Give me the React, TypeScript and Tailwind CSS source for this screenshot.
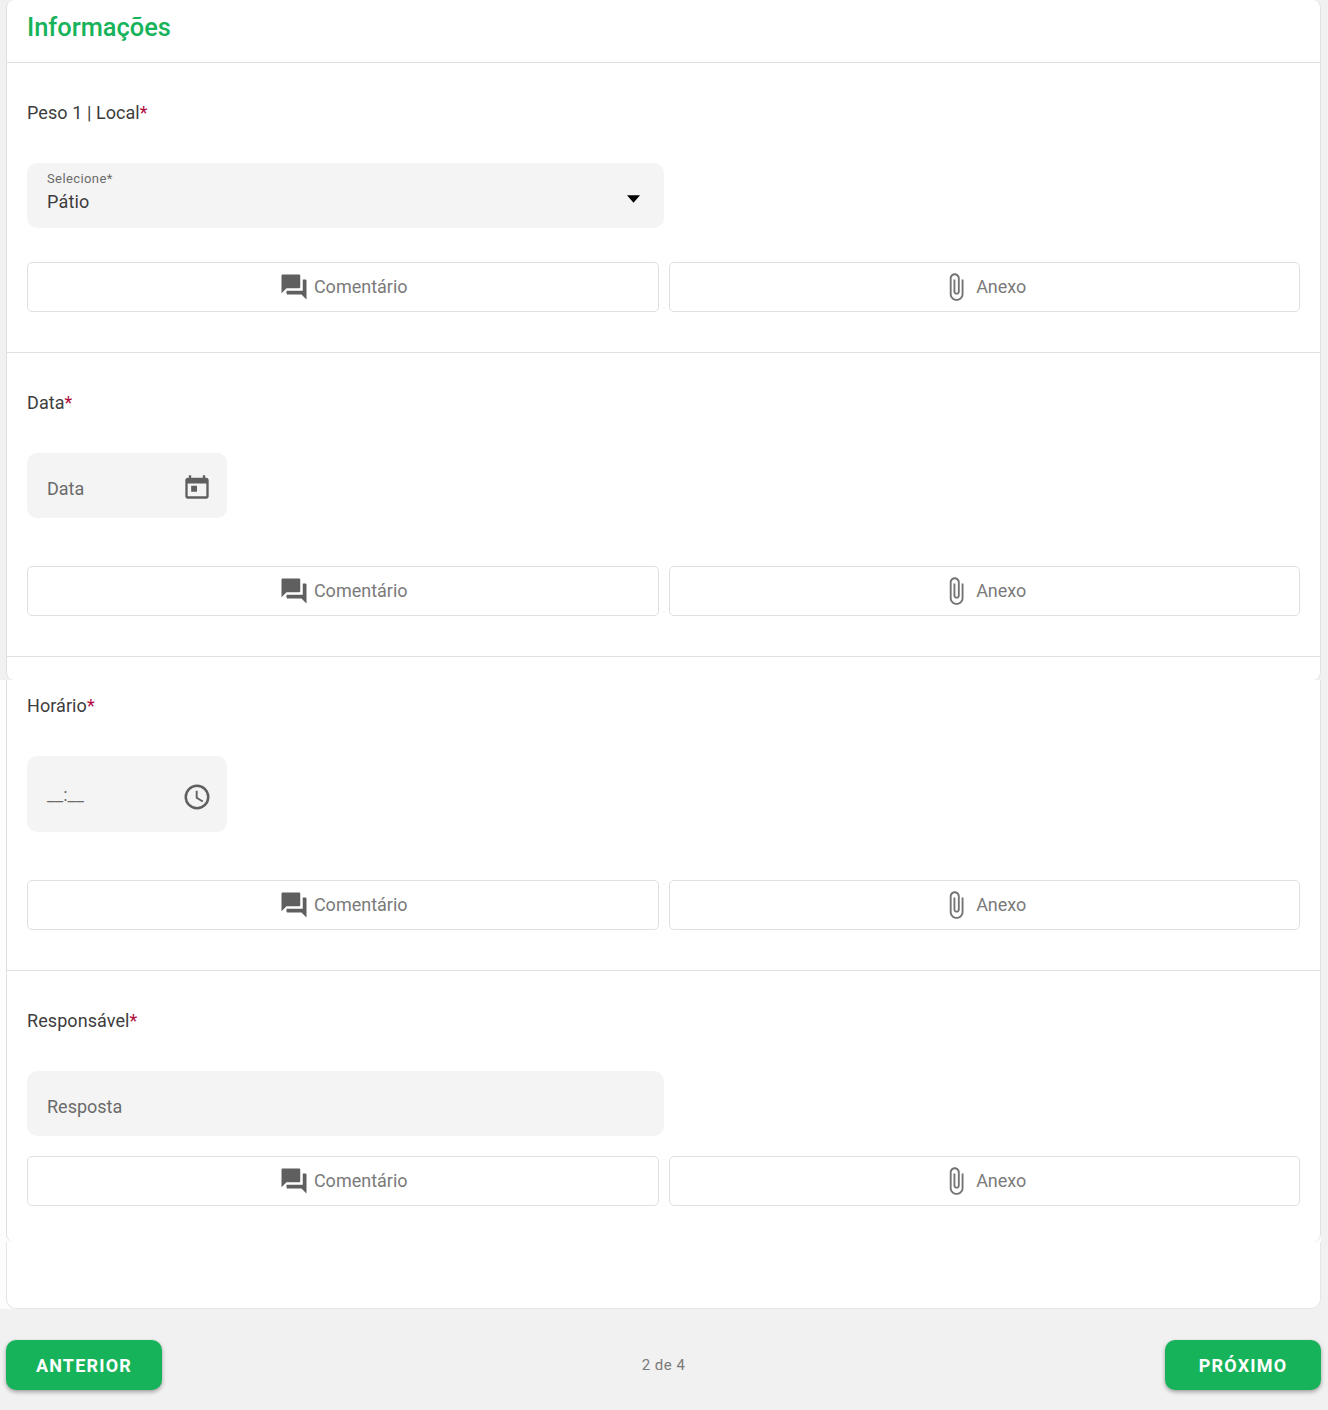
import { ReactNode } from "react";

const ROBOTO = "font-['Roboto',sans-serif]";

function CommentIcon() {
  return (
    <svg viewBox="0 0 24 24" className="ml-[1px] h-[30px] w-[30px] fill-[#5f5f5f]">
      <path d="M21 6h-2v9H6v2c0 .55.45 1 1 1h11l4 4V7c0-.55-.45-1-1-1zm-4 6V3c0-.55-.45-1-1-1H3c-.55 0-1 .45-1 1v14l4-4h10c.55 0 1-.45 1-1z" />
    </svg>
  );
}

function ClipIcon() {
  return (
    <svg viewBox="0 0 24 24" className="-ml-[1px] h-[30px] w-[30px] fill-[#747474]">
      <path d="M16.5 6v11.5c0 2.21-1.79 4-4 4s-4-1.79-4-4V5c0-1.38 1.12-2.5 2.5-2.5s2.5 1.12 2.5 2.5v10.5c0 .55-.45 1-1 1s-1-.45-1-1V6H10v9.5c0 1.38 1.12 2.5 2.5 2.5s2.5-1.12 2.5-2.5V5c0-2.21-1.79-4-4-4S7 2.79 7 5v12.5c0 3.04 2.46 5.5 5.5 5.5s5.5-2.46 5.5-5.5V6h-1.5z" />
    </svg>
  );
}

function ActionRow() {
  return (
    <div className="flex gap-[10px]">
      <button className="flex h-[50px] flex-1 items-center justify-center gap-[5px] rounded-[5px] border border-[#e0e0e0] bg-white text-[18px] text-[#7a7a7a]">
        <CommentIcon />
        <span className="pb-[2px]">Comentário</span>
      </button>
      <button className="flex h-[50px] flex-1 items-center justify-center gap-[5px] rounded-[5px] border border-[#e0e0e0] bg-white text-[18px] text-[#7a7a7a]">
        <ClipIcon />
        <span className="pb-[2px]">Anexo</span>
      </button>
    </div>
  );
}

function Label({ text }: { text: string }) {
  return (
    <div className="text-[18px] leading-[24px] tracking-[0.07px] text-[#3d3d3d]">
      {text}
      <span className="text-[#b00d3f]">*</span>
    </div>
  );
}

function Field({ children, wide, h = "h-[65px]" }: { children: ReactNode; wide?: boolean; h?: string }) {
  return (
    <div
      className={`relative flex ${h} items-center rounded-[10px] bg-[#f4f4f4] px-5 ${wide ? "w-[637px]" : "w-[200px]"}`}
    >
      {children}
    </div>
  );
}

export default function App() {
  return (
    <div className={`${ROBOTO} flex min-h-[1410px] flex-col bg-[#f1f1f1]`}>
      <div className="pr-[7px]">
        {/* first block */}
        <div className="ml-[6px] h-[680px] rounded-[8px] border-x border-[#e0e0e0] bg-white">
          <div className="flex h-[63px] items-center border-b border-[#e0e0e0] px-5 pb-[7px]">
            <h2 className="text-[25.4px] font-medium text-[#16b35a]">Informações</h2>
          </div>

          <section className="flex h-[290px] flex-col border-b border-[#e0e0e0] px-5 pt-[38px]">
            <Label text="Peso 1 | Local" />
            <div className="mt-[38px]">
              <Field wide>
                <div className="flex flex-col pb-[8px]">
                  <span className="text-[13px] leading-[15px] tracking-[0.4px] text-[#6b6b6b]">Selecione*</span>
                  <span className="mt-[5px] text-[18px] leading-[22px] tracking-[0.2px] text-[#3d3d3d]">Pátio</span>
                </div>
                <svg viewBox="0 0 14 8" className="absolute right-[24px] top-[32px] h-[8px] w-[13px] fill-black">
                  <path d="M0 0h14L7 8z" />
                </svg>
              </Field>
            </div>
            <div className="mt-[34px]">
              <ActionRow />
            </div>
          </section>

          <section className="flex h-[304px] flex-col border-b border-[#e0e0e0] px-5 pt-[38px]">
            <Label text="Data" />
            <div className="mt-[38px]">
              <Field>
                <span className="pt-[6px] text-[18px] text-[#6b6b6b]">Data</span>
                <svg viewBox="0 0 24 24" className="absolute right-[16px] top-[20px] h-[28px] w-[28px] fill-[#5f5f5f]">
                  <path d="M20 4h-1V2h-2v2H7V2H5v2H4c-1.1 0-2 .9-2 2v14c0 1.1.9 2 2 2h16c1.1 0 2-.9 2-2V6c0-1.1-.9-2-2-2zm0 16H4V9h16v11zM7 11h5v5H7z" />
                </svg>
              </Field>
            </div>
            <div className="mt-[48px]">
              <ActionRow />
            </div>
          </section>
        </div>

        {/* lower blocks sit on a white strip that reaches the left window edge */}
        <div className="rounded-br-[10px] bg-[#fdfdfd] pl-[6px]">
          <div className="flex h-[562px] flex-col rounded-b-[8px] border-x border-[#e0e0e0] bg-white">
            <section className="flex h-[291px] flex-col border-b border-[#e0e0e0] px-5 pt-[14px]">
              <Label text="Horário" />
              <div className="mt-[38px]">
                <Field h="h-[76px]">
                  <span className="text-[18px] text-[#6b6b6b]">__:__</span>
                  <svg viewBox="0 0 24 24" className="absolute right-[15px] top-[26px] h-[30px] w-[30px] fill-[#5f5f5f]">
                    <path d="M12 2a10 10 0 1 0 0 20 10 10 0 0 0 0-20zm0 18a8 8 0 1 1 0-16 8 8 0 0 1 0 16zm.5-13H11v6l5.2 3.1.8-1.2-4.5-2.7z" />
                  </svg>
                </Field>
              </div>
              <div className="mt-[48px]">
                <ActionRow />
              </div>
            </section>

            <section className="flex flex-col px-5 pt-[38px]">
              <Label text="Responsável" />
              <div className="mt-[38px]">
                <Field wide>
                  <span className="pt-[6px] text-[18px] text-[#6b6b6b]">Resposta</span>
                </Field>
              </div>
              <div className="mt-5">
                <ActionRow />
              </div>
            </section>
          </div>

          {/* empty block */}
          <div className="h-[67px] rounded-b-[10px] border-x border-b border-[#e6e6e6] bg-white" />
        </div>
      </div>

      <footer className="flex flex-1 items-start justify-between pl-[6px] pr-[7px] pt-[31px]">
        <button className="h-[50px] w-[156px] rounded-[10px] bg-[#16b35a] text-[18px] font-bold tracking-[1.2px] text-white shadow-[0_2px_4px_rgba(0,0,0,0.35)]">
          ANTERIOR
        </button>
        <span className="mt-[14px] text-[15px] tracking-[0.5px] text-[#7a7a7a]">2 de 4</span>
        <button className="h-[50px] w-[156px] rounded-[10px] bg-[#16b35a] text-[18px] font-bold tracking-[1.2px] text-white shadow-[0_2px_4px_rgba(0,0,0,0.35)]">
          PRÓXIMO
        </button>
      </footer>
    </div>
  );
}
